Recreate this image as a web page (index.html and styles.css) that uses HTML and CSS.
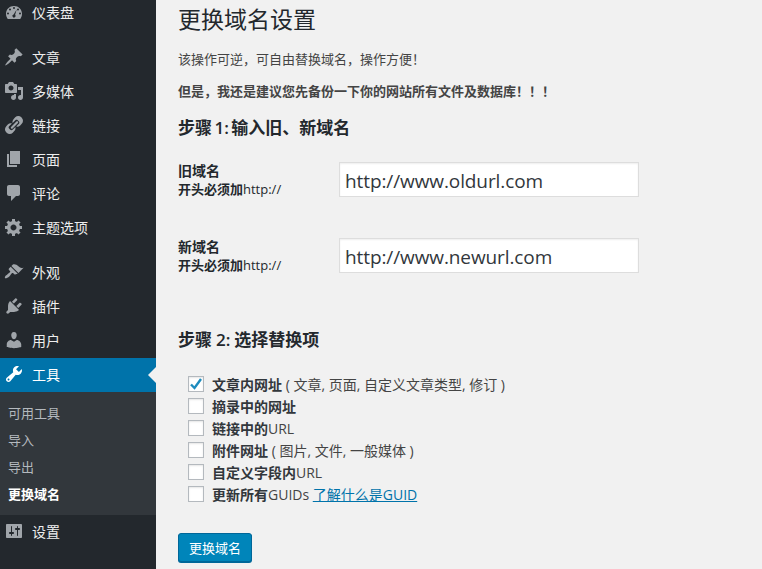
FILE: index.html
```html
<!DOCTYPE html>
<html lang="zh-CN">
<head>
    <meta charset="UTF-8">
    <title>更换域名设置</title>
    <link rel="stylesheet" href="styles.css">
</head>
<body>
    <div class="wrap">
        <!-- 侧边栏 -->
        <ul class="menu">
            <li class="item">
                <svg class="icon" viewBox="0 0 20 20"><path fill-rule="evenodd" d="M3.76 17h12.48C17.34 15.57 18 13.79 18 11.860 18 7.200 14.420 4 10 4S2 7.200 2 11.860C2 13.790 2.660 15.570 3.760 17zM10 5a1 1 0 1 1 0 2 1 1 0 0 1 0-2zM6 6.500a1 1 0 1 1 0 2 1 1 0 0 1 0-2zM14 6.500a1 1 0 1 1 0 2 1 1 0 0 1 0-2zM4 10.500a1 1 0 1 1 0 2 1 1 0 0 1 0-2zM16 10.500a1 1 0 1 1 0 2 1 1 0 0 1 0-2zM12.700 7.500l-1.600 5.300a1.600 1.600 0 1 1-1.500-.4z"/></svg>
                仪表盘
            </li>
            <li class="sep"></li>
            <li class="item">
                <svg class="icon" viewBox="0 0 20 20"><path d="M10.440 3.020l1.820-1.820 6.360 6.350-1.830 1.820c-1.050-.68-2.480-.57-3.410.36l-.75.75c-.92.93-1.040 2.350-.35 3.410l-1.830 1.820-2.410-2.410-2.800 2.790c-.42.42-3.380 2.710-3.800 2.290s1.860-3.390 2.280-3.810l2.790-2.790L4.100 9.360l1.830-1.820c1.050.69 2.480.57 3.400-.36l.75-.75c.93-.92 1.050-2.350.36-3.410z"/></svg>
                文章
            </li>
            <li class="item">
                <svg class="icon" viewBox="0 0 20 20"><path fill-rule="evenodd" d="M13 11V4c0-.55-.45-1-1-1h-1.670L9 1H5L3.670 3H2c-.55 0-1 .45-1 1v7c0 .55.45 1 1 1h10c.55 0 1-.45 1-1zM7 4.500c1.380 0 2.500 1.120 2.500 2.500S8.380 9.500 7 9.500 4.500 8.380 4.500 7 5.620 4.500 7 4.500zM14 6h5v10.500c0 1.380-1.120 2.500-2.500 2.500S14 17.880 14 16.500s1.120-2.500 2.500-2.500c.17 0 .34.020.5.050V9h-3V6zm-4 8.050V13h2v3.500c0 1.380-1.120 2.500-2.500 2.500S7 17.880 7 16.500 8.120 14 9.500 14c.17 0 .34.020.5.050z"/></svg>
                多媒体
            </li>
            <li class="item">
                <svg class="icon" viewBox="0 0 20 20"><path d="M17.740 2.760c1.680 1.690 1.680 4.410 0 6.100l-1.530 1.520c-1.120 1.120-2.700 1.490-4.130 1.130l2.830-2.830c.63-.63.63-1.660 0-2.290l-1.210-1.210c-.63-.63-1.650-.63-2.280 0L8.590 8.010c-.36-1.430.01-3.010 1.130-4.130l1.520-1.530c1.690-1.680 4.420-1.680 6.100 0zM8.590 13.430l5.340-5.340c.42-.42.42-1.100 0-1.520-.44-.43-1.130-.39-1.530 0l-5.330 5.340c-.42.42-.42 1.100 0 1.520.43.43 1.100.43 1.520 0zM2.260 17.240c-1.680-1.690-1.680-4.410 0-6.100l1.530-1.520c1.120-1.120 2.700-1.490 4.130-1.130l-2.830 2.830c-.63.63-.63 1.660 0 2.290l1.210 1.210c.63.63 1.650.63 2.280 0l2.830-2.830c.36 1.430-.01 3.010-1.130 4.130l-1.520 1.530c-1.690 1.680-4.420 1.680-6.100 0z"/></svg>
                链接
            </li>
            <li class="item">
                <svg class="icon" viewBox="0 0 20 20"><path d="M6 15V2h10v13H6zm-1 1h8v2H3V5h2v11z"/></svg>
                页面
            </li>
            <li class="item">
                <svg class="icon" viewBox="0 0 20 20"><path d="M5 2h9c1.100 0 2 .9 2 2v7c0 1.100-.9 2-2 2h-2l-5 5v-5H5c-1.100 0-2-.9-2-2V4c0-1.100.9-2 2-2z"/></svg>
                评论
            </li>
            <li class="item">
                <svg class="icon" viewBox="0 0 20 20"><path d="M18 12h-2.180c-.17.7-.44 1.350-.81 1.930l1.540 1.540-2.100 2.100-1.540-1.540c-.58.36-1.230.63-1.910.79V19H8v-2.180c-.68-.16-1.330-.43-1.910-.79l-1.540 1.540-2.120-2.120 1.540-1.540c-.36-.58-.63-1.230-.79-1.910H1V9.030h2.170c.16-.7.44-1.360.8-1.940L2.430 5.550l2.100-2.100 1.540 1.540c.58-.37 1.240-.64 1.930-.81V2h3v2.180c.68.16 1.330.43 1.910.79l1.540-1.540 2.120 2.120-1.540 1.540c.36.59.64 1.240.8 1.940H18V12zm-8.500 1.500c1.660 0 3-1.340 3-3s-1.340-3-3-3-3 1.340-3 3 1.340 3 3 3z"/></svg>
                主题选项
            </li>
            <li class="sep"></li>
            <li class="item">
                <svg class="icon" viewBox="0 0 20 20"><path d="M14.480 11.060L7.410 3.990l1.500-1.500c.5-.56 2.300-.47 3.510.32 1.210.8 1.430 1.280 2.910 2.100 1.180.64 2.450 1.260 4.230.91l-5.080 5.240zm-.71.71L6.700 4.700 4.930 6.470c-.39.39-.39 1.020 0 1.410l1.060 1.060c.39.39.39 1.030 0 1.420-.6.6-1.430 1.110-2.210 1.690-.35.26-.7.53-1.010.84C1.430 13.230.43 15.640 1 16.200c.56.57 2.970-.43 4.310-1.770.31-.31.58-.66.84-1.010.58-.78 1.090-1.610 1.690-2.210.39-.39 1.030-.39 1.420 0l1.060 1.060c.39.39 1.020.39 1.410 0z"/></svg>
                外观
            </li>
            <li class="item">
                <svg class="icon" viewBox="0 0 20 20"><path d="M13.110 4.360L9.870 7.600 8 5.730l3.240-3.240c.35-.34 1.050-.2 1.560.32.52.51.66 1.210.31 1.550zm-8 1.770l.91-1.120 9.010 9.010-1.190.84c-.71.71-2.630 1.160-3.820 1.160H6.140L4.900 17.260c-.59.59-1.540.59-2.120 0-.59-.58-.59-1.530 0-2.120l1.240-1.240v-3.880c0-1.130.4-3.190 1.090-3.890zm7.260 3.970l3.240-3.240c.34-.35 1.040-.21 1.550.31.52.51.66 1.210.31 1.550l-3.240 3.250z"/></svg>
                插件
            </li>
            <li class="item">
                <svg class="icon" viewBox="0 0 20 20"><path d="M10 9.250c-2.270 0-2.730-3.440-2.730-3.440C7 4.020 7.820 2 9.970 2c2.160 0 2.980 2.020 2.710 3.810 0 0-.41 3.440-2.680 3.440zm0 2.570L12.720 10c2.390 0 4.520 2.330 4.520 4.530v2.490s-3.650 1.130-7.240 1.130c-3.650 0-7.240-1.130-7.240-1.130v-2.490c0-2.250 1.940-4.480 4.150-4.480z"/></svg>
                用户
            </li>
            <li class="item current">
                <svg class="icon" viewBox="0 0 20 20"><path fill-rule="evenodd" d="M16.680 9.770c-1.340 1.340-3.300 1.670-4.950.99l-5.410 6.520c-.99.99-2.590.99-3.580 0s-.99-2.590 0-3.570l6.520-5.420c-.68-1.650-.35-3.610.99-4.950 1.280-1.280 3.120-1.620 4.720-1.060l-2.890 2.890 2.820 2.820 2.860-2.870c.53 1.580.18 3.400-1.080 4.650zM3.810 16.210c.4.39 1.030.39 1.420 0 .4-.4.4-1.030 0-1.430-.39-.39-1.020-.39-1.420 0-.39.4-.39 1.030 0 1.430z"/></svg>
                工具
            </li>
            <li class="sub">
                <a>可用工具</a>
                <a>导入</a>
                <a>导出</a>
                <a class="on">更换域名</a>
            </li>
            <li class="item">
                <svg class="icon" viewBox="0 0 20 20"><path fill-rule="evenodd" d="M18 16V4c0-.55-.45-1-1-1H3c-.55 0-1 .45-1 1v12c0 .55.45 1 1 1h14c.55 0 1-.45 1-1zM8 11h1c.55 0 1 .45 1 1s-.45 1-1 1H8v1.500c0 .28-.22.5-.5.5s-.5-.22-.5-.5V13H6c-.55 0-1-.45-1-1s.45-1 1-1h1V5.500c0-.28.22-.5.5-.5s.5.22.5.5V11zm5-2h-1c-.55 0-1-.45-1-1s.45-1 1-1h1V5.500c0-.28.22-.5.5-.5s.5.22.5.5V7h1c.55 0 1 .45 1 1s-.45 1-1 1h-1v5.500c0 .28-.22.5-.5.5s-.5-.22-.5-.5V9z"/></svg>
                设置
            </li>
        </ul>

        <!-- 内容 -->
        <div class="main">
            <h1>更换域名设置</h1>
            <p class="intro">该操作可逆，可自由替换域名，操作方便！</p>
            <p class="warn">但是，我还是建议您先备份一下你的网站所有文件及数据库！！！</p>
            <h2>步骤<span class="num first"> 1: </span>输入旧、新域名</h2>
            <div class="row">
                <label class="name"><b class="big">旧域名</b><br><b>开头必须加</b>http://</label>
                <input class="url" type="text" value="http://www.oldurl.com">
            </div>
            <div class="row">
                <label class="name"><b class="big">新域名</b><br><b>开头必须加</b>http://</label>
                <input class="url" type="text" value="http://www.newurl.com">
            </div>
            <h2 class="step2">步骤<span class="num"> 2: </span>选择替换项</h2>
            <ul class="opts">
                <li><span class="box"><svg viewBox="0 0 14 14"><path d="M2 7.500l3.500 3.500L12 2"/></svg></span><span><b>文章内网址</b> ( 文章, 页面, 自定义文章类型, 修订 )</span></li>
                <li><span class="box"></span><span><b>摘录中的网址</b></span></li>
                <li><span class="box"></span><span><b>链接中的</b>URL</span></li>
                <li><span class="box"></span><span><b>附件网址</b> ( 图片, 文件, 一般媒体 )</span></li>
                <li><span class="box"></span><span><b>自定义字段内</b>URL</span></li>
                <li><span class="box"></span><span><b>更新所有</b>GUIDs <a href="#">了解什么是GUID</a></span></li>
            </ul>
            <button class="btn">更换域名</button>
        </div>
    </div>
</body>
</html>
```
FILE: styles.css
```css
html, body {
    margin: 0;
    padding: 0;
    height: 569px;
    overflow: hidden;
}
body {
    font-family: "Open Sans", "Noto Sans CJK SC", sans-serif;
    font-size: 13px;
    color: #444;
    background-color: #f1f1f1;
}
.wrap {
    display: flex;
    height: 569px;
}

/* 侧边栏 */
.menu {
    width: 156px;
    flex: none;
    margin: 0;
    padding: 0;
    list-style: none;
    background-color: #23282d;
    overflow: hidden;
}
.item {
    box-sizing: border-box;
    display: flex;
    align-items: center;
    height: 34px;
    padding: 0 0 2px 4px;
    font-size: 14px;
    color: #eee;
}
.item:first-child {
    margin-top: -4px;
}
.icon {
    width: 20px;
    height: 20px;
    margin-right: 8px;
    fill: #a0a5aa;
}
.sep {
    height: 11px;
}
.current {
    position: relative;
    background-color: #0073aa;
    color: #fff;
}
.current .icon {
    fill: #fff;
}
.current::after {
    content: "";
    position: absolute;
    right: 0;
    top: 9px;
    border: 8px solid transparent;
    border-right-color: #f1f1f1;
}
.sub {
    padding: 8px 0 7px;
    background-color: #32373c;
}
.sub a {
    display: block;
    height: 27px;
    line-height: 27px;
    padding-left: 8px;
    color: #b4b9be;
}
.sub a.on {
    color: #fff;
    font-weight: bold;
}

/* 内容 */
.main {
    flex: 1;
    padding-left: 22px;
}
h1 {
    margin: 0;
    padding-top: 2px;
    font-size: 23px;
    font-weight: 400;
    line-height: 34px;
    color: #23282d;
}
.intro {
    margin: 14px 0 0;
    line-height: 18px;
}
.warn {
    margin: 14px 0 0;
    line-height: 18px;
    font-weight: bold;
}
h2 {
    margin: 17px 0 0;
    font-size: 17px;
    font-weight: 600;
    line-height: 22px;
    color: #23282d;
}
.num {
    word-spacing: -0.5px;
}
.num.first {
    word-spacing: -2px;
}
.row {
    display: flex;
    align-items: flex-start;
    height: 35px;
    margin-top: 41px;
}
h2 + .row {
    margin-top: 23px;
}
.name {
    width: 161px;
    line-height: 18px;
    color: #23282d;
}
.big {
    font-size: 14px;
}
.url {
    box-sizing: border-box;
    width: 300px;
    height: 35px;
    padding: 2px 5px 0;
    border: 1px solid #ddd;
    background-color: #fff;
    box-shadow: inset 0 1px 2px rgba(0, 0, 0, 0.07);
    font-family: "Open Sans", sans-serif;
    font-size: 19px;
    letter-spacing: -0.1px;
    color: #32373c;
}
.step2 {
    margin-top: 56px;
}
.opts {
    margin: 22px 0 0;
    padding: 0 0 0 10px;
    list-style: none;
    font-size: 14px;
}
.opts li {
    display: flex;
    align-items: center;
    height: 22px;
    white-space: pre;
}
.opts b {
    color: #32373c;
}
.box {
    box-sizing: border-box;
    flex: none;
    width: 16px;
    height: 16px;
    margin-right: 8px;
    border: 1px solid #b4b9be;
    background-color: #fff;
    box-shadow: inset 0 1px 2px rgba(0, 0, 0, 0.1);
}
.box svg {
    display: block;
    width: 14px;
    height: 14px;
    fill: none;
    stroke: #1e8cbe;
    stroke-width: 2.4;
}
.opts a {
    color: #0073aa;
    text-decoration: underline;
}
.btn {
    display: block;
    box-sizing: border-box;
    width: 74px;
    height: 29px;
    margin-top: 28px;
    padding: 0;
    border: 1px solid #006799;
    border-radius: 3px;
    background-color: #0085ba;
    box-shadow: 0 1px 0 #006799;
    font-family: "Open Sans", "Noto Sans CJK SC", sans-serif;
    font-size: 13px;
    color: #fff;
}
```
